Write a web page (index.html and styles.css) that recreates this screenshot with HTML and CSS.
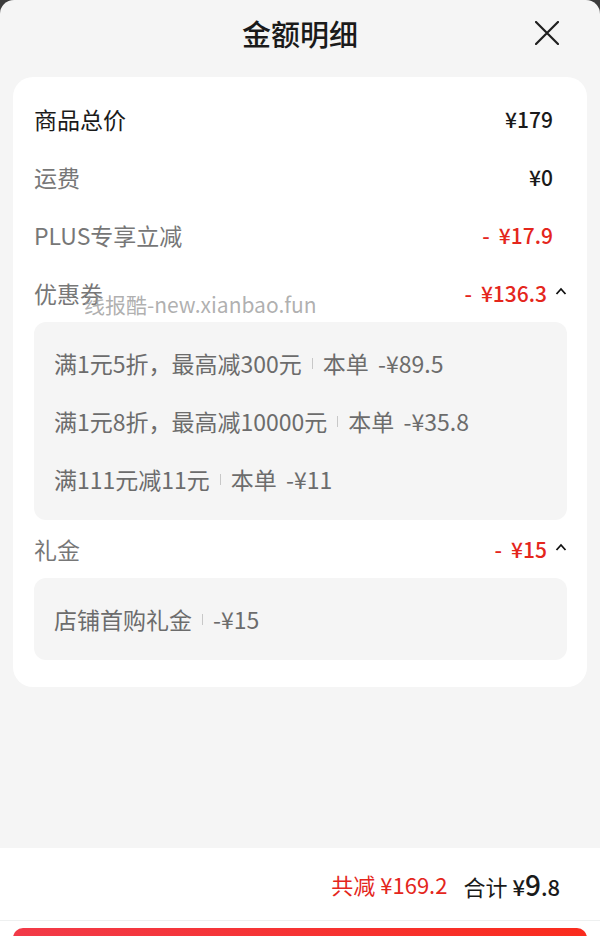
FILE: index.html
```html
<!DOCTYPE html>
<html lang="zh-CN">
<head>
    <meta charset="UTF-8">
    <meta name="viewport" content="width=device-width, initial-scale=1.0">
    <title>金额明细</title>
    <link rel="stylesheet" href="styles.css">
</head>
<body>
    <div class="sheet">
        <header class="sheet-header">
            <h1>金额明细</h1>
            <button class="close" aria-label="关闭">
                <svg width="24" height="24" viewBox="0 0 24 24">
                    <path d="M1 1 L23 23 M23 1 L1 23" stroke="#1f1f1f" stroke-width="2.2" fill="none" stroke-linecap="round"/>
                </svg>
            </button>
        </header>

        <section class="card">
            <div class="row">
                <span class="label main">商品总价</span>
                <span class="value plain">¥179</span>
            </div>
            <div class="row">
                <span class="label">运费</span>
                <span class="value plain">¥0</span>
            </div>
            <div class="row">
                <span class="label">PLUS专享立减</span>
                <span class="value plain red"><em>-</em>¥17.9</span>
            </div>
            <div class="row">
                <span class="label">优惠券</span>
                <span class="value red"><em>-</em>¥136.3<svg class="chevron" width="12" height="8" viewBox="0 0 12 8"><path d="M1.5 7 L6 2 L10.5 7" stroke="#111" stroke-width="1.8" fill="none"/></svg></span>
            </div>
            <div class="detail">
                <div class="detail-row">满1元5折，最高减300元<i class="sep"></i>本单 <span class="amt">-¥89.5</span></div>
                <div class="detail-row">满1元8折，最高减10000元<i class="sep"></i>本单 <span class="amt">-¥35.8</span></div>
                <div class="detail-row">满111元减11元<i class="sep"></i>本单 <span class="amt">-¥11</span></div>
            </div>
            <div class="row">
                <span class="label">礼金</span>
                <span class="value red"><em>-</em>¥15<svg class="chevron" width="12" height="8" viewBox="0 0 12 8"><path d="M1.5 7 L6 2 L10.5 7" stroke="#111" stroke-width="1.8" fill="none"/></svg></span>
            </div>
            <div class="detail">
                <div class="detail-row">店铺首购礼金<i class="sep"></i>-¥15</div>
            </div>

            <div class="watermark">线报酷-new.xianbao.fun</div>
        </section>

        <div class="spacer"></div>

        <footer class="footer">
            <div class="summary">
                <span class="saved">共减 ¥169.2</span>
                <span class="total">合计 <b>¥<big>9</big>.8</b></span>
            </div>
            <div class="button-wrap">
                <button class="pay"></button>
            </div>
        </footer>
    </div>
</body>
</html>
```

FILE: styles.css
```css
* {
    margin: 0;
    padding: 0;
    box-sizing: border-box;
}

html {
    background-color: #3c3c3c;
}

body {
    font-family: "Noto Sans CJK SC", "Noto Sans", sans-serif;
    color: #1a1a1a;
    height: 936px;
    overflow: hidden;
}

.sheet {
    display: flex;
    flex-direction: column;
    height: 936px;
    background-color: #f5f5f5;
    border-radius: 14px 14px 0 0;
}

.sheet-header {
    display: flex;
    align-items: center;
    justify-content: center;
    height: 77px;
    padding-bottom: 11px;
    position: relative;
}

.sheet-header h1 {
    font-size: 29px;
    font-weight: 500;
    color: #1a1a1a;
}

.close {
    position: absolute;
    right: 41px;
    top: 21px;
    width: 24px;
    height: 24px;
    border: none;
    background: none;
}

.card {
    position: relative;
    margin: 0 13px;
    padding: 13px 20px 27px 21px;
    background-color: #fff;
    border-radius: 20px;
}

.row {
    display: flex;
    align-items: center;
    justify-content: space-between;
    height: 58px;
}

.label {
    font-size: 23px;
    color: #777;
}

.label.main {
    color: #1a1a1a;
}

.value {
    display: flex;
    align-items: center;
    font-size: 21px;
    font-weight: 500;
    color: #1a1a1a;
}

.value em {
    font-style: normal;
    margin-right: 9px;
}

.value.plain {
    margin-right: 14px;
}

.value.red {
    color: #e4261c;
}

.chevron {
    margin-left: 8px;
    margin-top: -4px;
}

.detail {
    background-color: #f5f5f5;
    border-radius: 12px;
    padding: 12px 20px 12px 20px;
}

.detail-row {
    display: flex;
    align-items: center;
    height: 58px;
    font-size: 23px;
    color: #6c6c6c;
    white-space: pre;
}

.detail-row .amt {
    margin-left: 4px;
}

.sep {
    display: inline-block;
    width: 1px;
    height: 11px;
    margin: 0 10px;
    background-color: #c8c8c8;
}

.watermark {
    position: absolute;
    left: 71px;
    top: 212px;
    font-size: 21px;
    color: rgba(150, 150, 150, 0.75);
    pointer-events: none;
}

.spacer {
    flex: 1;
}

.footer {
    background-color: #fff;
}

.summary {
    display: flex;
    align-items: center;
    justify-content: flex-end;
    gap: 16px;
    height: 73px;
    padding-right: 40px;
    border-bottom: 1px solid #eef0f0;
}

.saved {
    font-size: 22px;
    color: #e4261c;
}

.total {
    font-size: 22px;
    color: #1a1a1a;
}

.total b {
    font-weight: 500;
}

.total big {
    font-size: 28px;
}

.button-wrap {
    height: 15px;
    padding: 7px 13px 0;
}

.pay {
    display: block;
    width: 100%;
    height: 44px;
    border: none;
    border-radius: 10px;
    background: linear-gradient(90deg, #f23a48, #fa2c1e);
}
```
